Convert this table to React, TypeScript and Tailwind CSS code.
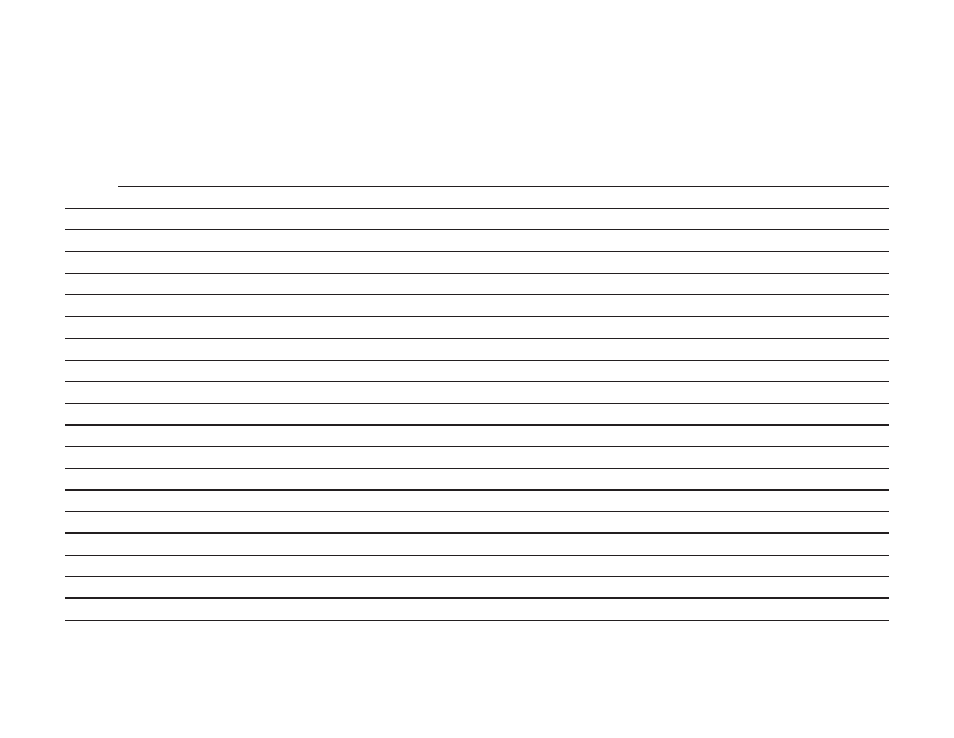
import React from 'react';

// Blank ruled table: a short header rule and 20 body rows
const thickRows = [11, 14, 16, 19];

export default function App() {
  const rows = Array.from({ length: 20 }, (_, i) => i + 1);

  return (
    <div className="w-[954px] h-[738px] bg-white" style={{ fontFamily: '"Liberation Sans", Arial, sans-serif' }}>
      <div className="pt-[186px] pl-[65px] w-[889px]">
        {/* header rule, starts after the label column */}
        <div className="ml-[53px] border-t border-[#231f20]" />
        <div className="flex flex-col">
          {rows.map((r) => (
            <div
              key={r}
              className={
                thickRows.includes(r)
                  ? 'h-[21.7px] box-border border-b-2 border-[#231f20]'
                  : 'h-[21.7px] box-border border-b border-[#231f20]'
              }
            />
          ))}
        </div>
      </div>
    </div>
  );
}
